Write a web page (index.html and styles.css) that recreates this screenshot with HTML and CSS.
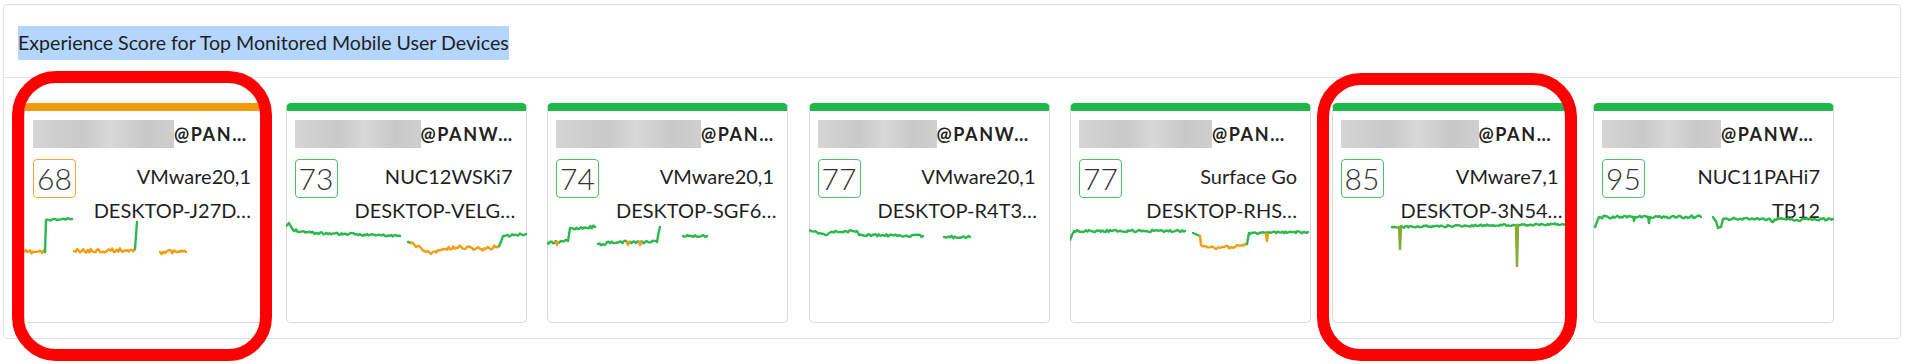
FILE: index.html
```html
<!DOCTYPE html>
<html lang="en">
<head>
    <meta charset="UTF-8">
    <meta name="viewport" content="width=device-width, initial-scale=1.0">
    <title>Experience Score</title>
    <link rel="stylesheet" href="styles.css">
</head>
<body>
    <div class="panel">
        <div class="panel-header">
            <span class="title">Experience Score for Top Monitored Mobile User Devices</span>
        </div>

        <div class="cards">
            <div class="card warn">
                <div class="card-user"><span class="redacted" style="width:141px"></span><span class="domain">@PAN…</span></div>
                <div class="card-model"><span class="score">68</span><span class="model">VMware20,1</span></div>
                <div class="card-host">DESKTOP-J27D…</div>
                <svg class="spark" id="spark1" viewBox="0 0 241 220"></svg>
            </div>
            <div class="card">
                <div class="card-user"><span class="redacted" style="width:126px"></span><span class="domain">@PANW…</span></div>
                <div class="card-model"><span class="score">73</span><span class="model">NUC12WSKi7</span></div>
                <div class="card-host">DESKTOP-VELG…</div>
                <svg class="spark" id="spark2" viewBox="0 0 241 220"></svg>
            </div>
            <div class="card">
                <div class="card-user"><span class="redacted" style="width:145px"></span><span class="domain">@PAN…</span></div>
                <div class="card-model"><span class="score">74</span><span class="model">VMware20,1</span></div>
                <div class="card-host">DESKTOP-SGF6…</div>
                <svg class="spark" id="spark3" viewBox="0 0 241 220"></svg>
            </div>
            <div class="card">
                <div class="card-user"><span class="redacted" style="width:119px"></span><span class="domain">@PANW…</span></div>
                <div class="card-model"><span class="score">77</span><span class="model">VMware20,1</span></div>
                <div class="card-host">DESKTOP-R4T3…</div>
                <svg class="spark" id="spark4" viewBox="0 0 241 220"></svg>
            </div>
            <div class="card">
                <div class="card-user"><span class="redacted" style="width:133px"></span><span class="domain">@PAN…</span></div>
                <div class="card-model"><span class="score">77</span><span class="model">Surface Go</span></div>
                <div class="card-host">DESKTOP-RHS…</div>
                <svg class="spark" id="spark5" viewBox="0 0 241 220"></svg>
            </div>
            <div class="card">
                <div class="card-user"><span class="redacted" style="width:138px"></span><span class="domain">@PAN…</span></div>
                <div class="card-model"><span class="score">85</span><span class="model">VMware7,1</span></div>
                <div class="card-host">DESKTOP-3N54…</div>
                <svg class="spark" id="spark6" viewBox="0 0 241 220"></svg>
            </div>
            <div class="card">
                <div class="card-user"><span class="redacted" style="width:119px"></span><span class="domain">@PANW…</span></div>
                <div class="card-model"><span class="score">95</span><span class="model">NUC11PAHi7</span></div>
                <div class="card-host">TB12</div>
                <svg class="spark" id="spark7" viewBox="0 0 241 220"></svg>
            </div>
        </div>
    </div>

    <div class="mark mark-1"></div>
    <div class="mark mark-2"></div>

    <script>
        // g = good, o = fair, m = mixed (spikes)
        const series = {
            spark1: [
                ['o', 2, [[0, 149], [21, 149]]],
                ['g', 1, [[21, 149], [22, 117], [48, 116]]],
                ['o', 2, [[50, 148], [108, 147], [111, 146]]],
                ['g', 0, [[111, 146], [113, 119]]],
                ['o', 2, [[136, 149], [162, 149]]]
            ],
            spark2: [
                ['g', 1.2, [[0, 123], [3, 120], [7, 127], [30, 130], [60, 131], [114, 133]]],
                ['g', 0, [[122, 139], [125, 140]]],
                ['o', 1.8, [[125, 140], [135, 145], [145, 151], [152, 147], [175, 144], [200, 146], [213, 143]]],
                ['g', 1.2, [[213, 143], [217, 133], [240, 131]]]
            ],
            spark3: [
                ['g', 1.5, [[0, 140], [21, 138], [23, 125], [48, 124]]],
                ['o', 0, [[9, 139], [10, 142], [11, 139]]],
                ['g', 1.5, [[51, 141], [80, 139], [110, 139], [113, 124]]],
                ['o', 0, [[80, 139], [81, 142], [82, 139]]],
                ['o', 0, [[92, 139], [93, 142], [94, 139]]],
                ['g', 1, [[136, 133], [160, 133]]]
            ],
            spark4: [
                ['g', 1.2, [[0, 127], [18, 132], [22, 129], [48, 128], [50, 132], [114, 133]]],
                ['g', 1.2, [[135, 134], [161, 134]]]
            ],
            spark5: [
                ['g', 1.2, [[0, 137], [4, 128], [115, 128]]],
                ['g', 0, [[123, 130], [130, 133]]],
                ['o', 1.5, [[130, 133], [131, 142], [150, 145], [170, 143], [177, 141]]],
                ['g', 1.2, [[177, 141], [179, 130], [238, 129]]],
                ['o', 0, [[196, 131], [197, 138], [198, 131]]]
            ],
            spark6: [
                ['g', 1, [[60, 124], [238, 121]]],
                ['m', 0, [[67, 124], [68, 146], [69, 124]]],
                ['m', 0, [[184, 122], [185, 163], [186, 122]]]
            ],
            spark7: [
                ['g', 1.4, [[2, 124], [6, 114], [40, 114], [41, 118], [42, 114], [55, 114], [56, 120], [57, 114], [108, 114]]],
                ['g', 1.4, [[120, 114], [123, 118], [125, 125], [128, 124], [130, 116], [175, 116], [180, 119], [185, 115], [200, 117], [240, 116]]]
            ]
        };

        let seed = 11;
        function rnd() {
            seed = (seed * 16807) % 2147483647;
            return seed / 2147483647;
        }

        function trace(keys, noise) {
            let pts = [];
            for (let i = 0; i < keys.length; i++) {
                let [x, y] = keys[i];
                if (i > 0 && noise > 0) {
                    let [px, py] = keys[i - 1];
                    let steps = Math.floor((x - px) / 1.5);
                    for (let s = 1; s < steps; s++) {
                        let t = s / steps;
                        pts.push([px + (x - px) * t, py + (y - py) * t + (rnd() - 0.5) * 2 * noise]);
                    }
                }
                pts.push([x, y]);
            }
            return pts.map(p => p[0].toFixed(1) + ',' + p[1].toFixed(1)).join(' ');
        }

        for (let id in series) {
            let svg = document.getElementById(id);
            series[id].forEach(([kind, noise, keys]) => {
                let line = document.createElementNS('http://www.w3.org/2000/svg', 'polyline');
                line.setAttribute('points', trace(keys, noise));
                line.setAttribute('class', 'line-' + kind);
                svg.appendChild(line);
            });
        }
    </script>
</body>
</html>
```

FILE: styles.css
```css
body {
    margin: 0;
    font-family: Lato, "Open Sans", sans-serif;
    color: #1f1f1f;
    background-color: #fff;
}
.panel {
    margin: 4px 11px 0 3px;
    height: 335px;
    box-sizing: border-box;
    border: 1px solid #dcdfe4;
    border-radius: 4px;
}
.panel-header {
    height: 73px;
    box-sizing: border-box;
    padding: 21px 0 0 14px;
    border-bottom: 1px solid #e1e4e8;
}
.title {
    display: inline-block;
    font-size: 19.6px;
    line-height: 34px;
    background-color: #b4d5fd;
}
.cards {
    display: flex;
    gap: 20.5px;
    padding: 25px 0 0 20px;
}
.card {
    position: relative;
    width: 241px;
    height: 220px;
    flex-shrink: 0;
    box-sizing: border-box;
    border: 1px solid #d6d9dd;
    border-top: 8px solid #1fb84b;
    border-radius: 5px;
    padding: 6px 13px 0 8px;
}
.card.warn {
    border-top-color: #f09a0a;
}
.card-user {
    display: flex;
    align-items: center;
    height: 34px;
}
.redacted {
    height: 28px;
    flex-shrink: 0;
    background: linear-gradient(90deg, #d5d5d5, #c9c9c9 35%, #d8d8d8 55%, #c8c8c8 80%, #cfcfcf);
}
.domain {
    font-size: 18px;
    font-weight: bold;
    letter-spacing: 1.6px;
    white-space: nowrap;
    color: #222;
}
.card-model {
    display: flex;
    justify-content: space-between;
    align-items: flex-start;
    margin-top: 8px;
    height: 39px;
}
.score {
    width: 43px;
    height: 39px;
    box-sizing: border-box;
    border: 1px solid #4cc064;
    border-radius: 4px;
    text-align: center;
    font-size: 30px;
    font-weight: 300;
    line-height: 37px;
    color: #333;
}
.warn .score {
    border-color: #f2a93a;
}
.model {
    font-size: 20px;
    line-height: 34px;
}
.card-host {
    padding-left: 60px;
    text-align: right;
    font-size: 20px;
    line-height: 24px;
    white-space: nowrap;
}
.spark {
    position: absolute;
    top: -8px;
    left: -1px;
    width: 241px;
    height: 220px;
    pointer-events: none;
}
.spark polyline {
    fill: none;
    stroke-width: 2.4;
    stroke-linejoin: round;
    stroke-linecap: round;
}
.line-g {
    stroke: #2db84b;
}
.line-o {
    stroke: #f09e14;
}
.line-m {
    stroke: #86ad2a;
}
.mark {
    position: absolute;
    box-sizing: border-box;
    border: 12px solid #ff0000;
    border-radius: 44px;
}
.mark-1 {
    left: 12px;
    top: 71px;
    width: 260px;
    height: 290px;
}
.mark-2 {
    left: 1317px;
    top: 73px;
    width: 260px;
    height: 288px;
}
```
